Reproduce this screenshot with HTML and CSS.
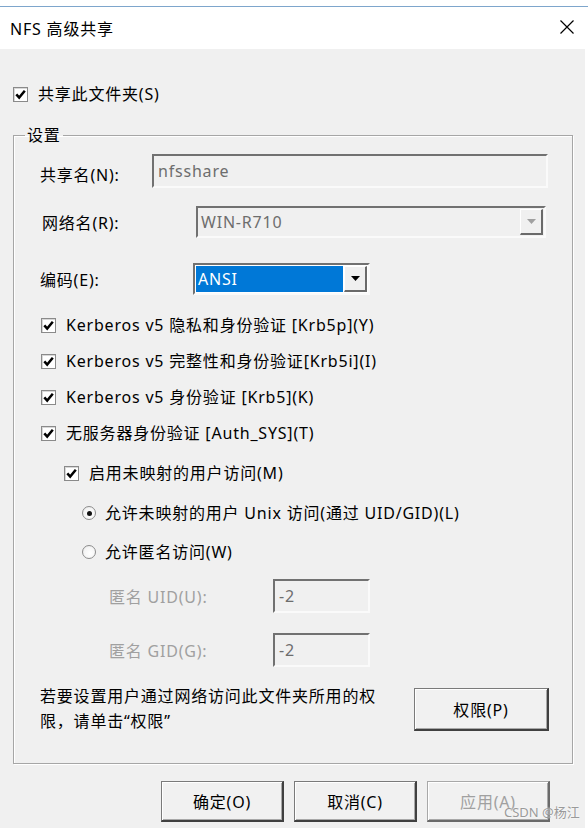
FILE: index.html
```html
<!DOCTYPE html>
<html lang="zh-CN">
<head>
<meta charset="utf-8">
<title>NFS 高级共享</title>
<link rel="stylesheet" href="styles.css">
</head>
<body>
<div class="topstrip"></div>
<div class="dialog">
  <div class="titlebar">
    <span class="title">NFS 高级共享</span>
    <svg class="close" width="14" height="14" viewBox="0 0 14 14"><path d="M0.5 0.5L13.5 13.5M13.5 0.5L0.5 13.5" stroke="#000" stroke-width="1.2" fill="none"/></svg>
  </div>
  <div class="body">
    <div class="check top-check"><span class="cb"><svg viewBox="0 0 13 13"><path d="M2.3 6.3L5.2 9.6L10.8 2.8" stroke="#000" stroke-width="2.5" fill="none"/></svg></span><span>共享此文件夹(S)</span></div>

    <fieldset class="group">
      <legend>设置</legend>
      <div class="group-inner">
        <div class="row row-share">
          <span class="lbl lbl-share">共享名(N):</span>
          <div class="field field-share">nfsshare</div>
        </div>
        <div class="row row-net">
          <span class="lbl lbl-net">网络名(R):</span>
          <div class="combo combo-net">
            <span class="value value-dis">WIN-R710</span>
            <span class="dd"><svg width="9" height="5" viewBox="0 0 9 5"><path d="M0 0H9L4.5 5Z" fill="#a0a0a0"/></svg></span>
          </div>
        </div>
        <div class="row row-enc">
          <span class="lbl lbl-enc">编码(E):</span>
          <div class="combo combo-enc">
            <span class="value value-sel">ANSI</span>
            <span class="dd"><svg width="9" height="5" viewBox="0 0 9 5"><path d="M0 0H9L4.5 5Z" fill="#000"/></svg></span>
          </div>
        </div>

        <div class="check opt first-opt"><span class="cb"><svg viewBox="0 0 13 13"><path d="M2.3 6.3L5.2 9.6L10.8 2.8" stroke="#000" stroke-width="2.5" fill="none"/></svg></span><span>Kerberos v5 隐私和身份验证 [Krb5p](Y)</span></div>
        <div class="check opt"><span class="cb"><svg viewBox="0 0 13 13"><path d="M2.3 6.3L5.2 9.6L10.8 2.8" stroke="#000" stroke-width="2.5" fill="none"/></svg></span><span>Kerberos v5 完整性和身份验证[Krb5i](I)</span></div>
        <div class="check opt"><span class="cb"><svg viewBox="0 0 13 13"><path d="M2.3 6.3L5.2 9.6L10.8 2.8" stroke="#000" stroke-width="2.5" fill="none"/></svg></span><span>Kerberos v5 身份验证 [Krb5](K)</span></div>
        <div class="check opt"><span class="cb"><svg viewBox="0 0 13 13"><path d="M2.3 6.3L5.2 9.6L10.8 2.8" stroke="#000" stroke-width="2.5" fill="none"/></svg></span><span>无服务器身份验证 [Auth_SYS](T)</span></div>
        <div class="check opt-sub"><span class="cb"><svg viewBox="0 0 13 13"><path d="M2.3 6.3L5.2 9.6L10.8 2.8" stroke="#000" stroke-width="2.5" fill="none"/></svg></span><span>启用未映射的用户访问(M)</span></div>

        <div class="radio radio-1"><span class="rb on"></span><span>允许未映射的用户 Unix 访问(通过 UID/GID)(L)</span></div>
        <div class="radio radio-2"><span class="rb"></span><span>允许匿名访问(W)</span></div>

        <div class="row row-uid">
          <span class="lbl lbl-anon">匿名 UID(U):</span>
          <div class="field field-anon">-2</div>
        </div>
        <div class="row row-gid">
          <span class="lbl lbl-anon">匿名 GID(G):</span>
          <div class="field field-anon">-2</div>
        </div>

        <div class="perm-row">
          <p class="perm-text">若要设置用户通过网络访问此文件夹所用的权限，请单击“权限”</p>
          <button class="btn btn-perm">权限(P)</button>
        </div>
      </div>
    </fieldset>

    <div class="footer">
      <button class="btn btn-foot">确定(O)</button>
      <button class="btn btn-foot">取消(C)</button>
      <button class="btn btn-foot btn-dis">应用(A)</button>
    </div>
    <span class="watermark">CSDN @杨江</span>
  </div>
</div>
</body>
</html>
```

FILE: styles.css
```css
* {
  box-sizing: border-box;
}

html, body {
  margin: 0;
  padding: 0;
  background: #fff;
}

body {
  width: 588px;
  height: 828px;
  overflow: hidden;
  font-family: "Noto Sans", "Noto Sans CJK SC", sans-serif;
  font-size: 16px;
  letter-spacing: 0.8px;
  color: #000;
}

.topstrip {
  height: 7px;
  background: #fff;
  border-bottom: 1px solid #7ea6cc;
}

.dialog {
  width: 585px;
}

.titlebar {
  height: 42px;
  background: #fff;
  display: flex;
  align-items: center;
  justify-content: space-between;
  padding: 0 11px 0 10px;
}

.title {
  font-size: 16px;
  line-height: 22px;
  padding-top: 2px;
}

.close {
  display: block;
  margin-top: -2px;
}

.body {
  position: relative;
  height: 779px;
  background: #f0f0f0;
  padding-top: 34px;
}

/* checkboxes */
.check {
  display: flex;
  align-items: center;
  height: 22px;
  line-height: 22px;
  white-space: nowrap;
}

.cb {
  width: 15px;
  height: 15px;
  flex: none;
  margin-right: 10px;
  background: #fff;
  border: 1px solid #8a8a8a;
  box-shadow: inset 1px 1px 0 #d8d8d8;
  display: flex;
  align-items: center;
  justify-content: center;
}

.cb svg {
  width: 13px;
  height: 13px;
  display: block;
}

.top-check {
  margin-left: 13px;
}

/* group box */
.group {
  margin: 19px 12px 0 13px;
  padding: 0 23px 29px 11px;
  border: 1px solid #a6a6a6;
  box-shadow: inset 1px 1px 0 #fff, 1px 1px 0 #fff;
  min-width: 0;
}

.group legend {
  padding: 0 2px;
  line-height: 22px;
  height: 22px;
}

.group-inner {
  padding-left: 15px;
}

.row {
  display: flex;
  align-items: center;
}

.lbl {
  flex: none;
  white-space: nowrap;
}

.row-share {
  margin-top: 8px;
}

.lbl-share {
  width: 112px;
  padding-top: 6px;
}

.field {
  border: 2px solid;
  border-color: #717171 #fafafa #fafafa #717171;
  background: #f0f0f0;
  color: #6d6d6d;
  display: flex;
  align-items: center;
  padding-left: 4px;
}

.field-share {
  width: 396px;
  height: 34px;
}

.row-net {
  margin-top: 18px;
}

.lbl-net {
  width: 154px;
  margin-left: 2px;
}

.combo {
  display: flex;
  height: 32px;
  border: 2px solid;
  border-color: #717171 #fafafa #fafafa #717171;
  padding: 1px;
}

.combo-net {
  width: 350px;
  background: #f0f0f0;
}

.value {
  flex: 1;
  display: flex;
  align-items: center;
  padding-left: 2px;
}

.value-dis {
  color: #6d6d6d;
}

.dd {
  width: 23px;
  flex: none;
  display: flex;
  align-items: center;
  justify-content: center;
  background: #f0f0f0;
  border: 1px solid;
  border-color: #fff #6a6a6a #6a6a6a #fff;
  border-right-width: 2px;
  border-bottom-width: 2px;
}

.row-enc {
  margin-top: 25px;
}

.lbl-enc {
  width: 153px;
}

.combo-enc {
  width: 177px;
  background: #fff;
}

.value-sel {
  background: #0078d7;
  color: #fff;
  margin-right: 1px;
}

/* option checkboxes */
.opt {
  margin-top: 14px;
  margin-left: 1px;
}

.first-opt {
  margin-top: 19px;
}

.opt-sub {
  margin-top: 18px;
  margin-left: 24px;
}

/* radios */
.radio {
  display: flex;
  align-items: center;
  height: 22px;
  line-height: 22px;
  margin-left: 42px;
  white-space: nowrap;
}

.radio-1 {
  margin-top: 18px;
}

.radio-2 {
  margin-top: 17px;
}

.rb {
  width: 14px;
  height: 14px;
  flex: none;
  margin-right: 9px;
  border-radius: 50%;
  border: 1px solid #8c8c8c;
  background: radial-gradient(circle at 60% 60%, #fff 0, #f4f4f4 60%, #dcdcdc 100%);
  position: relative;
}

.rb.on::after {
  content: "";
  position: absolute;
  left: 3.5px;
  top: 3.5px;
  width: 5px;
  height: 5px;
  border-radius: 50%;
  background: #111;
}

.row-uid {
  margin-top: 16px;
}

.row-gid {
  margin-top: 20px;
}

.lbl-anon {
  width: 164px;
  margin-left: 69px;
  color: #a0a0a0;
}

.field-anon {
  width: 97px;
  height: 34px;
}

/* permission row */
.perm-row {
  margin-top: 17px;
  display: flex;
  justify-content: space-between;
  align-items: flex-start;
}

.perm-text {
  margin: 0;
  width: 344px;
  line-height: 25px;
}

.btn {
  font-family: inherit;
  font-size: 16px;
  letter-spacing: 0.8px;
  color: #000;
  background: #f1f1f1;
  border: 1px solid;
  border-color: #7a7a7a #404040 #404040 #7a7a7a;
  border-right-width: 2px;
  border-bottom-width: 2px;
  box-shadow: inset 1px 1px 0 #fff, inset -1px -1px 0 #a8a8a8;
  padding: 0;
  cursor: default;
}

.btn-perm {
  margin-top: 4px;
  width: 135px;
  height: 43px;
}

.footer {
  margin-top: 17px;
  display: flex;
  justify-content: flex-end;
  gap: 10px;
  padding-right: 35px;
}

.btn-foot {
  width: 123px;
  height: 41px;
}

.btn-dis {
  color: #a0a0a0;
  border-color: #a8a8a8 #6a6a6a #6a6a6a #a8a8a8;
}

.watermark {
  position: absolute;
  left: 504px;
  top: 755px;
  font-family: "Noto Sans", "Noto Sans CJK SC", sans-serif;
  font-size: 13px;
  letter-spacing: 0;
  line-height: 16px;
  color: #9a9a9a;
  text-shadow: 0 0 2px #fff;
}
```
